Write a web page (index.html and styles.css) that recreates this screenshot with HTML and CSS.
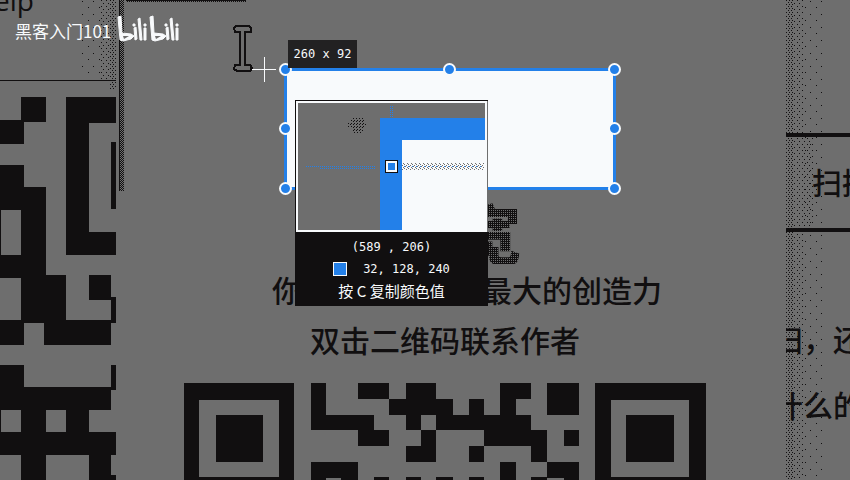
FILE: index.html
```
<!DOCTYPE html>
<html lang="zh-CN">
<head>
<meta charset="utf-8">
<title>截图工具</title>
<link rel="stylesheet" href="styles.css">
</head>
<body>
<main class="desktop">
  <section class="side">
    <header class="side-head">elp</header>
    <svg class="code-left" width="116" height="383" viewBox="0 97 116 383" shape-rendering="crispEdges">
      <path d="M21 97h25v25H21zM0 120h24v24H0zM66 97h50v26H89v109h27v23H66zM111 142h5v67h-5zM0 165h24v22h22v88h20v45h45v-20h0v-3h5v26h-5v22H44v-22H24v22H0v-25h21v-42H0zM89 275h22v25H89zM0 365h24v22h87v-22h5v25h-5v20H89v22h27v23h-5v20h5v5H89v-25H46v25H21v-25H0z"/>
      <path class="hole" d="M1 210h20v45H1zM1 410h20v22H1zM46 410h20v22H46z"/>
    </svg>
    <svg class="grain grain-left" width="36" height="97" shape-rendering="crispEdges">
      <defs>
        <pattern id="fine" width="3" height="4" patternUnits="userSpaceOnUse"><path d="M0 0h1v1H0zM2 2h1v1H2z"/></pattern>
        <pattern id="mid" width="5" height="6" patternUnits="userSpaceOnUse"><path d="M1 0h1v1H1zM3 3h1v1H3z"/></pattern>
        <pattern id="sparse" width="11" height="13" patternUnits="userSpaceOnUse"><path d="M2 1h1v1H2zM8 7h1v1H8z"/></pattern>
      </defs>
      <rect width="20" height="74" fill="url(#sparse)"/>
      <rect x="20" width="10" height="80" fill="url(#mid)"/>
      <rect x="30" width="6" height="90" fill="url(#fine)"/>
    </svg>
  </section>

  <section class="page">
    <span class="page-edge"></span>
    <span class="page-top"></span>
    <h1 class="title">宽</h1>
    <p class="line split"><span>你</span><span>最大的创造力</span></p>
    <p class="line">双击二维码联系作者</p>
    <svg class="code" width="522" height="97" viewBox="184 383 522 97" shape-rendering="crispEdges">
      <path d="M184 383h110v97H184zM311 383h15v32h48v15h15v16h-31v-16h-47zM358 383h31v16h-31zM406 383h30v16h17v16h16v-16h15v16h16v-32h31v16h-15v16h15v15h16v32h-16v-16h-47v-16h-48v32h-30v-16h15v-16h-15v-15h-17v-16h17zM469 446h15v16h-15zM547 383h32v32h-32zM564 430h15v16h-15zM311 462h47v18h-17v-2h-15v2h-15zM500 462h16v18h-16zM547 462h32v18h-15v-2h-17v2h-16v-3h16zM374 477h15v3h-15zM406 477h15v3h-15zM436 477h17v3h-17zM469 477h15v3h-15zM595 383h111v97H595z"/>
      <path class="hole" d="M199 400h80v77h-80zM421 415h15v15h-15zM611 400h78v77h-78z"/>
      <path d="M216 415h47v47h-47zM626 415h48v47h-48z"/>
    </svg>
  </section>

  <aside class="notes">
    <svg class="grain" width="42" height="100%" shape-rendering="crispEdges">
      <rect width="8" height="100%" fill="url(#fine)"/>
      <rect x="8" width="10" height="100%" fill="url(#mid)"/>
      <rect x="18" width="20" height="100%" fill="url(#sparse)"/>
      <rect x="18" y="135" width="10" height="95" fill="url(#mid)"/>
    </svg>
    <p class="note-title">扫描</p>
    <p class="note">扫，还</p>
    <p class="note">什么的</p>
  </aside>
</main>

<div class="selection">
  <i class="handle nw"></i><i class="handle n"></i><i class="handle ne"></i>
  <i class="handle w"></i><i class="handle e"></i>
  <i class="handle sw"></i><i class="handle se"></i>
</div>
<output class="size">260 x 92</output>

<div class="picker">
  <svg class="lens" width="193" height="132" viewBox="295 100 193 132" shape-rendering="crispEdges">
    <defs>
      <pattern id="dots" width="2" height="2" patternUnits="userSpaceOnUse"><path class="blue" d="M0 0h1v1H0z"/></pattern>
      <pattern id="weave" width="4" height="4" patternUnits="userSpaceOnUse"><path class="gray" d="M0 0h1v1H0zM2 1h1v1H2zM1 2h1v1H1zM3 3h1v1H3z"/><path class="blue" d="M0 2h1v1H0z"/></pattern>
      <pattern id="inkdots" width="3" height="3" patternUnits="userSpaceOnUse"><path d="M0 0h1v1H0zM2 1h1v1H2z"/></pattern>
    </defs>
    <path class="gray" d="M295 100h193v132H295z"/>
    <path d="M295 100h193v1H295zM295 100h1v132h-1z"/>
    <path class="white" d="M296 101h191v131H296z"/>
    <path class="gray" d="M298 103h187v127H298z"/>
    <path class="blue" d="M380 118h105v22h-83v90h-22z"/>
    <path class="white" d="M402 140h85v91h-85z"/>
    <path fill="url(#dots)" d="M305 165h15v3h-15zM320 165h55v4h-55zM378 117h107v1H378zM390 106h4v11h-4z"/>
    <path fill="url(#weave)" d="M402 163h82v7h-82z"/>
    <path fill="url(#inkdots)" d="M351 118h13v4h2v5h-3v6h-11v-6h-4v-5h3z"/>
    <path d="M385 160h13v13h-13z"/><path class="white" d="M386 161h11v11h-11z"/><path class="blue" d="M388 163h7v7h-7z"/>
  </svg>
  <div class="info">
    <span>(589 , 206)</span>
    <span class="rgb"><i class="swatch"></i>32, 128, 240</span>
    <span class="hint">按 C 复制颜色值</span>
  </div>
</div>

<svg class="cursors" width="46" height="60" viewBox="232 24 46 60" shape-rendering="crispEdges">
  <path class="beam" d="M236 26h13l2 2v4h-6v33h5l2 3-2 3h-13l-3-2 1-4h5V32h-5l-1-4z"/>
  <path class="cross" d="M252 69h24v1h-24zM264 57h1v25h-1z"/>
</svg>

<div class="mark">
  <span>黑客入门101</span>
  <svg width="64" height="28" viewBox="117 15 64 28" aria-label="bilibili">
    <g id="bili">
      <path d="M118 17l3-1 1 17 9 1 3 2-3 3-8 2-3-1z"/>
      <path class="dent" d="M123 36l6 0-5 3z"/>
      <path d="M134 28l2-1 1 12-2 1zM133 24l2 0 0 2-2 0zM138 19l2-1 2 22-2 0zM144 28l2 0 0 12-2 0zM144 24l2 0 0 2-2 0z"/>
    </g>
    <use href="#bili" x="32"/>
  </svg>
</div>
</body>
</html>
```
FILE: styles.css
```
:root {
  --gray: #6e6e6e;
  --ink: #110f10;
  --blue: #2380e9;
  --white: #f8fafc;
}

* { box-sizing: border-box; }

body {
  margin: 0;
  position: relative;
  overflow: hidden;
  background: var(--gray);
  color: var(--ink);
  font-family: "Noto Sans CJK SC", sans-serif;
}

h1, p { margin: 0; }
svg { display: block; fill: var(--ink); }
.hole, .gray { fill: var(--gray); }
.blue { fill: var(--blue); }
.white { fill: var(--white); }

.desktop {
  display: grid;
  grid-template-columns: 116px 1fr 64px;
  min-height: 100vh;
}

/* Left window */
.side { position: relative; overflow: hidden; }
.side-head {
  height: 81px;
  margin-bottom: 16px;
  border-bottom: 1px solid var(--ink);
  font: 500 28px/0 "Open Sans", sans-serif;
  text-indent: -6px;
}
.grain { position: absolute; top: 0; left: 0; }
.grain-left { left: auto; right: 0; }

/* Centre window */
.page {
  position: relative;
  display: flex;
  flex-direction: column;
  align-items: center;
  padding: 198px 12px 0 0;
}
.page-edge, .page-top {
  position: absolute;
  background: repeating-conic-gradient(var(--ink) 0 25%, var(--gray) 0 50%) 0 0 / 2px 2px;
}
.page-edge {
  top: 0;
  left: 3px;
  width: 5px;
  height: 191px;
  border-left: 1px solid var(--ink);
}
.page-top {
  top: 0;
  left: 10px;
  width: 120px;
  height: 2px;
  border-top: 1px solid var(--ink);
}
.title {
  width: 152px;
  text-align: right;
  font-size: 64px;
  line-height: 66px;
  font-weight: 900;
  color: transparent;
  background: repeating-conic-gradient(var(--ink) 0 75%, var(--gray) 0 100%) 0 0 / 2px 2px;
  background-clip: text;
}
.line { font-size: 30px; line-height: 50px; font-weight: 500; }
.split {
  display: flex;
  justify-content: space-between;
  width: 390px;
  margin-left: 44px;
}
.code { margin-top: 19px; }

/* Right window */
.notes {
  position: relative;
  overflow: hidden;
  padding-top: 133px;
  font-size: 30px;
  font-weight: 500;
  white-space: nowrap;
}
.note-title {
  border: solid var(--ink);
  border-width: 4px 0;
  height: 99px;
  line-height: 88px;
  padding-left: 26px;
  margin-bottom: 73px;
}
.note { line-height: 66px; margin-left: -13px; }

/* Selection frame */
.selection {
  position: absolute;
  left: 284px;
  top: 68px;
  width: 332px;
  height: 122px;
  border: 3px solid var(--blue);
  background: var(--white);
}
.handle {
  position: absolute;
  width: 13px;
  height: 13px;
  margin: -7px;
  border: 2px solid var(--white);
  border-radius: 50%;
  background: var(--blue);
}
.nw, .n, .ne { top: -1px; }
.w, .e { top: 50%; }
.sw, .se { top: 118px; }
.nw, .w, .sw { left: -1px; }
.n { left: 50%; }
.ne, .e, .se { left: 328px; }

.size {
  position: absolute;
  left: 288px;
  top: 40px;
  width: 69px;
  height: 28px;
  background: #222122;
  color: var(--white);
  font: 12px/28px "DejaVu Sans Mono", monospace;
  text-align: center;
}

/* Colour picker */
.picker { position: absolute; left: 295px; top: 100px; width: 193px; }
.info {
  display: flex;
  flex-direction: column;
  align-items: center;
  height: 74px;
  padding-top: 4px;
  background: var(--ink);
  color: var(--white);
  font: 12px/22px "DejaVu Sans Mono", monospace;
}
.rgb { display: flex; align-items: center; gap: 16px; }
.swatch {
  width: 14px;
  height: 14px;
  border: 1px solid var(--white);
  background: var(--blue);
}
.hint { font-family: "Noto Sans CJK SC", sans-serif; font-size: 15px; }

/* Pointer and watermark */
.cursors { position: absolute; left: 232px; top: 24px; }
.beam { fill: var(--gray); stroke: var(--ink); stroke-width: 2; }
.cross { fill: var(--white); }
.mark {
  position: absolute;
  left: 15px;
  top: 15px;
  display: flex;
  gap: 6px;
  color: var(--white);
  font-size: 17px;
  line-height: 32px;
}
.mark svg { fill: var(--white); stroke: var(--white); }
.mark .dent { fill: var(--gray); stroke: none; }
```
